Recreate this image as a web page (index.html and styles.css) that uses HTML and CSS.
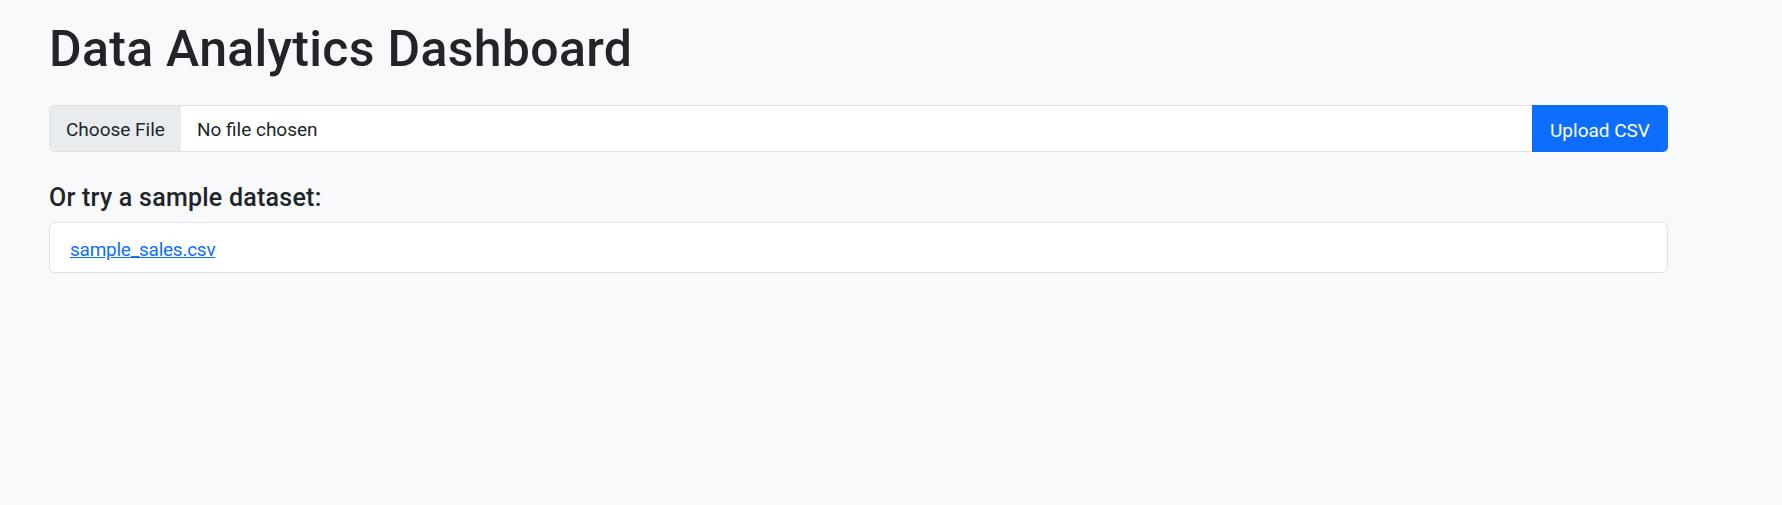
FILE: index.html
```html
<!DOCTYPE html>
<html lang="en">
<head>
<meta charset="utf-8">
<title>Data Analytics Dashboard</title>
<link rel="stylesheet" href="styles.css">
</head>
<body>
<main class="container">
  <h1 class="title">Data Analytics Dashboard</h1>
  <form class="upload">
    <div class="file-field">
      <span class="file-btn">Choose File</span>
      <span class="file-name">No file chosen</span>
    </div>
    <button type="button" class="upload-btn">Upload CSV</button>
  </form>
  <h5 class="subtitle">Or try a sample dataset:</h5>
  <div class="sample-list">
    <div class="sample-item"><a href="#" class="sample-link">sample_sales.csv</a></div>
  </div>
</main>
</body>
</html>
```
FILE: styles.css
```css
html, body {
  margin: 0;
  padding: 0;
}
body {
  background: #f8f9fa;
  color: #212529;
  font-family: Roboto, "Liberation Sans", sans-serif;
  font-size: 19px;
  line-height: 1.5;
  min-height: 505px;
}
.container {
  width: 1619px;
  padding: 19px 0 0 49px;
}
.title {
  margin: 0 0 26px 0;
  font-size: 50px;
  font-weight: 500;
  line-height: 60px;
  letter-spacing: 0.3px;
  color: #212529;
}
.upload {
  display: flex;
  height: 47px;
  margin: 0;
}
.file-field {
  flex: 1;
  display: flex;
  align-items: center;
  background: #fff;
  border: 1px solid #dee2e6;
  border-right: none;
  border-radius: 5px 0 0 5px;
  overflow: hidden;
}
.file-btn {
  display: flex;
  align-items: center;
  box-sizing: border-box;
  height: 100%;
  padding: 4px 16px 0;
  background: #e9ecef;
  color: #212529;
}
.file-name {
  padding: 4px 0 0 16px;
  color: #212529;
}
.upload-btn {
  width: 136px;
  height: 47px;
  border: none;
  background: #0d6efd;
  color: #fff;
  font-family: inherit;
  font-size: 19px;
  border-radius: 0 5px 5px 0;
  padding: 4px 0 0;
  cursor: pointer;
}
.subtitle {
  margin: 31px 0 9px 0;
  font-size: 25px;
  font-weight: 500;
  line-height: 30px;
  letter-spacing: 0.25px;
  color: #212529;
}
.sample-list {
  background: #fff;
  border: 1px solid #dee2e6;
  border-radius: 6px;
}
.sample-item {
  padding: 12px 20px 8px;
  line-height: 29px;
}
.sample-link {
  color: #0d6efd;
  text-decoration: underline;
  letter-spacing: -0.25px;
}
```
